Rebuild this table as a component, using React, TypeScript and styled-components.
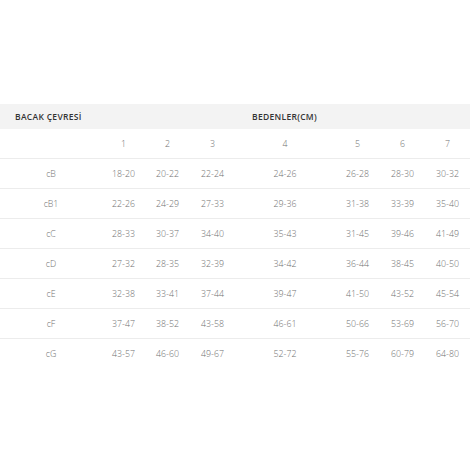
import React from "react";
import styled, { createGlobalStyle } from "styled-components";

const Global = createGlobalStyle`
  html, body { margin: 0; padding: 0; background: #fff; }
  body { font-family: "Open Sans", "Liberation Sans", sans-serif; }
`;

const Page = styled.div`
  padding-top: 104px;
  width: 470px;
`;

const Table = styled.div`
  display: grid;
  grid-template-columns: 102px 43px 45px 45px 100px 45px 45px 45px;
`;

const HeadCell = styled.div<{ $pad: number }>`
  grid-column: span 4;
  height: 25px;
  display: flex;
  align-items: center;
  padding-left: ${(p) => p.$pad}px;
  background: #f3f3f3;
  font-size: 8.5px;
  font-weight: 600;
  color: #333;
  letter-spacing: 0.3px;
`;

const Cell = styled.div<{ $line: boolean }>`
  height: ${(p) => (p.$line ? 29 : 30)}px;
  display: flex;
  align-items: center;
  justify-content: center;
  font-size: 8.8px;
  font-weight: 300;
  color: #707070;
  border-bottom: ${(p) => (p.$line ? "1px solid #ececec" : "none")};
`;

const rows: string[][] = [
  ["", "1", "2", "3", "4", "5", "6", "7"],
  ["cB", "18-20", "20-22", "22-24", "24-26", "26-28", "28-30", "30-32"],
  ["cB1", "22-26", "24-29", "27-33", "29-36", "31-38", "33-39", "35-40"],
  ["cC", "28-33", "30-37", "34-40", "35-43", "31-45", "39-46", "41-49"],
  ["cD", "27-32", "28-35", "32-39", "34-42", "36-44", "38-45", "40-50"],
  ["cE", "32-38", "33-41", "37-44", "39-47", "41-50", "43-52", "45-54"],
  ["cF", "37-47", "38-52", "43-58", "46-61", "50-66", "53-69", "56-70"],
  ["cG", "43-57", "46-60", "49-67", "52-72", "55-76", "60-79", "64-80"],
];

export default function App() {
  return (
    <>
      <Global />
      <Page>
        <Table>
          <HeadCell $pad={15}>BACAK ÇEVRESİ</HeadCell>
          <HeadCell $pad={17}>BEDENLER(CM)</HeadCell>
          {rows.map((r, i) =>
            r.map((c, j) => (
              <Cell key={`${i}-${j}`} $line={i < rows.length - 1}>
                {c}
              </Cell>
            ))
          )}
        </Table>
      </Page>
    </>
  );
}
